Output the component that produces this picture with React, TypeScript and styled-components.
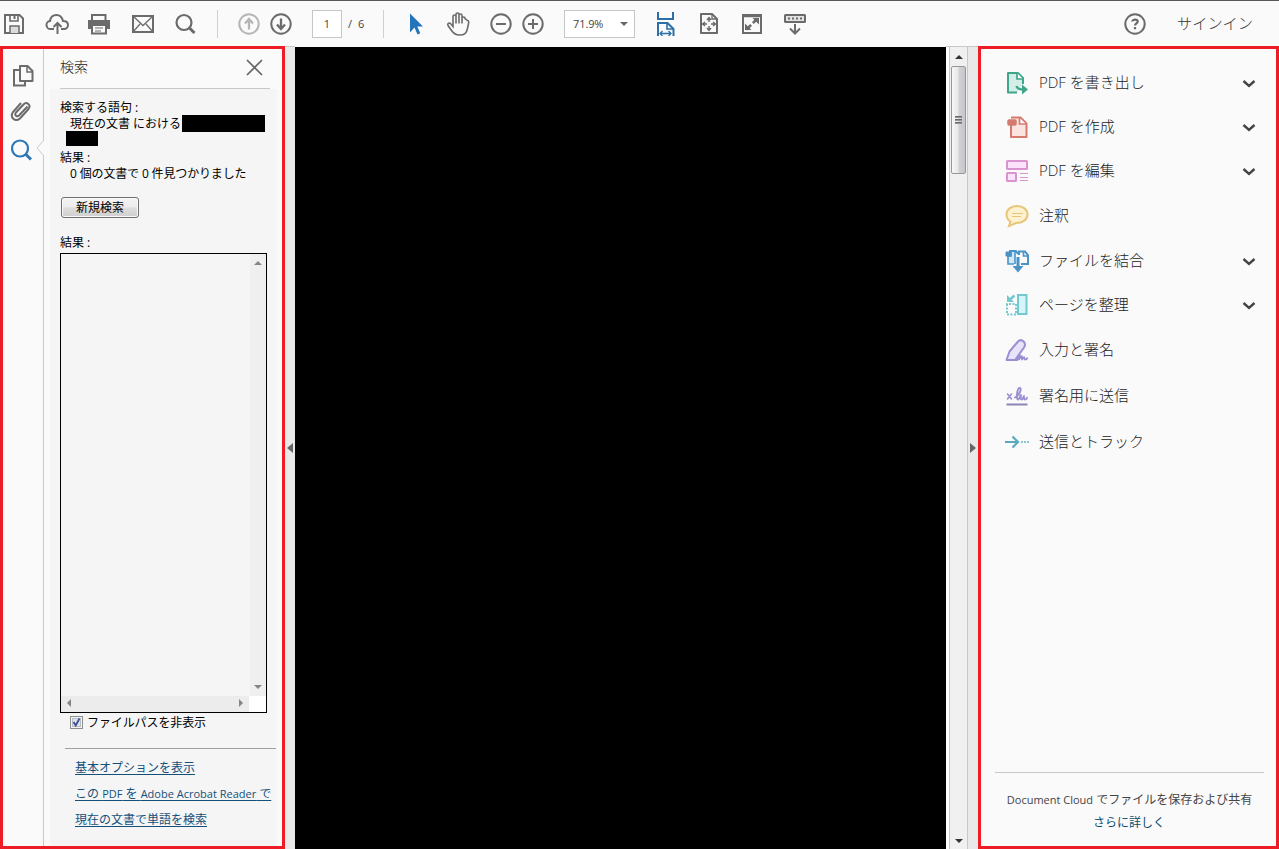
import React from "react";
import styled, { createGlobalStyle } from "styled-components";

const GlobalStyle = createGlobalStyle`
  * { box-sizing: border-box; }
  html, body { margin: 0; padding: 0; }
  body {
    width: 1279px; height: 849px; overflow: hidden; background: #fafafa;
    font-family: "Open Sans", "Noto Sans CJK JP", sans-serif;
  }
  button, a { font: inherit; color: inherit; }
`;

const RED = "#ee1c25";

const Page = styled.div`
  display: flex; flex-direction: column; width: 1279px; height: 849px;
`;

/* ---------- toolbar ---------- */
const Toolbar = styled.header`
  display: flex; align-items: center; flex: none; height: 46px;
  border-top: 1px solid #5b5759; background: #fafafa; color: #6b6b6b;
`;
const ToolIcon = styled.svg<{ $ml?: number; $tone?: string }>`
  flex: none; width: 24px; height: 24px; fill: none; stroke: currentColor; stroke-width: 2;
  margin-left: ${(p) => p.$ml ?? 0}px; color: ${(p) => p.$tone ?? "#6b6b6b"};
`;
const Divider = styled.span<{ $ml: number }>`
  flex: none; width: 1px; height: 28px; margin-left: ${(p) => p.$ml}px; background: #cfcfcf;
`;
const PageInput = styled.div`
  flex: none; width: 30px; height: 28px; margin-left: 19px; border: 1px solid #c6c6c6; background: #fff;
  font-size: 11px; line-height: 26px; text-align: center; color: #444;
`;
const PageCount = styled.span`
  flex: none; width: 17px; margin-left: 6px; font-size: 11px; line-height: 26px; white-space: pre; color: #444; word-spacing: 3px;
`;
const ZoomSelect = styled.div`
  display: flex; align-items: center; justify-content: space-between; flex: none;
  width: 71px; height: 28px; margin-left: 19px; padding: 0 6px 0 8px; border: 1px solid #c6c6c6; background: #fff;
  font-size: 11px; letter-spacing: -0.1px; color: #444;
`;
const Caret = styled.span`
  border: 4px solid transparent; border-top: 4px solid #666; border-bottom: 0;
`;
const HelpSlot = styled.div`
  display: flex; align-items: center; margin-left: auto;
`;
const SignIn = styled.span`
  width: 102px; margin-left: 30px; padding-bottom: 2px; font-size: 15.2px; line-height: 24px; font-weight: 300; color: #333;
`;

/* ---------- body ---------- */
const Body = styled.main`
  display: flex; flex: 1; min-height: 0;
`;
const LeftPanel = styled.section`
  display: flex; flex: none; width: 285px; border: 3px solid ${RED}; background: #fafafa;
`;
const NavStrip = styled.nav`
  display: flex; flex-direction: column; align-items: center; flex: none;
  position: relative; width: 41px; padding: 15px 3px 0 0; border-right: 1px solid #c9c9c9;
`;
const NavIcon = styled.svg<{ $mt?: number; $tone?: string }>`
  flex: none; width: 24px; height: 24px; fill: none; stroke-width: 2; stroke: ${(p) => p.$tone ?? "#6b6b6b"};
  margin-top: ${(p) => p.$mt ?? 0}px;
`;
const Notch = styled.svg`
  position: absolute; right: -1px; top: 90px; width: 8px; height: 18px;
`;
const SearchPane = styled.div`
  display: flex; flex-direction: column; flex: 1; min-width: 0; padding: 0 5px 0 6px;
`;
const PaneHeader = styled.div`
  display: flex; align-items: center; justify-content: space-between; flex: none;
  height: 40px; margin: 0 7px 0 10px; padding: 0 7px 3px 0; border-bottom: 1px solid #c8c8c8;
`;
const PaneTitle = styled.span`
  font-size: 14px; line-height: 20px; font-weight: 300; color: #222;
`;
const CloseIcon = styled.svg`
  width: 17px; height: 17px; stroke: #666; stroke-width: 1.7;
`;
const PaneBody = styled.div`
  display: flex; flex-direction: column; flex: 1; padding: 11px 0 0 10px; background: #f5f5f5;
  font-size: 12px; line-height: 16px; color: #000; white-space: nowrap;
`;
const Line = styled.div<{ $indent?: number }>`
  display: flex; flex: none; height: 16px; padding-left: ${(p) => p.$indent ?? 0}px;
`;
const CountLine = styled(Line)`
  letter-spacing: -0.15px;
`;
const Redaction = styled.span<{ $w: number; $h: number }>`
  flex: none; width: ${(p) => p.$w}px; height: ${(p) => p.$h}px; margin-top: -1px; background: #000;
`;
const ScopeText = styled.span`
  width: 113px; margin-right: -1px;
`;
const RedactedLine = styled(Line)`
  height: 18px;
`;
const NewSearch = styled.button`
  flex: none; width: 78px; height: 21px; margin: 15px 0 17px 1px; padding: 0; border: 1px solid #707070; border-radius: 3px;
  background: linear-gradient(#f3f3f3 0%, #ececec 48%, #dddddd 52%, #cfcfcf 100%);
  box-shadow: inset 0 0 0 1px #fafafa; font-size: 12px; line-height: 19px; color: #000;
`;
const ResultBox = styled.div`
  display: grid; grid-template: 1fr 16px / 1fr 17px; flex: none; width: 207px; height: 460px; margin-top: 2px;
  border: 1px solid #000; background: #f5f5f5;
`;
const VTrack = styled.div`
  display: flex; flex-direction: column; align-items: center; justify-content: space-between;
  padding: 7px 0 7px; margin-left: 1px; background: #efefef;
`;
const HTrack = styled.div`
  display: flex; align-items: center; justify-content: space-between; padding: 0 6px 2px 6px; background: #ececec;
`;
const Corner = styled.div`
  background: #fff;
`;
const Arrow = styled.span<{ $dir: "up" | "down" | "left" | "right"; $size?: number; $tone?: string }>`
  width: 0; height: 0; border: ${(p) => p.$size ?? 4}px solid transparent;
  ${(p) => {
    const s = p.$size ?? 4;
    const c = p.$tone ?? "#858585";
    const [point, base] = { up: ["top", "bottom"], down: ["bottom", "top"], left: ["left", "right"], right: ["right", "left"] }[p.$dir];
    return `border-${point}: 0; border-${base}: ${s + (s > 4 ? 1 : 0)}px solid ${c};`;
  }}
`;
const CheckRow = styled.label`
  display: flex; align-items: center; flex: none; height: 20px; padding-left: 10px; gap: 4px; letter-spacing: -0.1px;
`;
const CheckBox = styled.svg`
  width: 13px; height: 13px; margin-top: -1px;
`;
const PaneRule = styled.hr`
  flex: none; width: 211px; height: 1px; margin: 15px 0 6px 5px; border: 0; background: #a0a0a0;
`;
const PaneLink = styled.a`
  flex: none; height: 26px; padding-left: 15px; font-size: 12px; line-height: 26px; color: #14507a;
  text-decoration: underline; text-underline-offset: 2px; text-decoration-thickness: 1px;
`;

const Gutter = styled.div<{ $w: number }>`
  display: flex; align-items: center; justify-content: center; flex: none; width: ${(p) => p.$w}px;
  border-top: 1px solid #c8c8c8; background: #e9e9e9;
`;
const Document = styled.div`
  flex: 1; margin-top: 1px; background: #000;
`;
const ScrollArea = styled.div`
  display: flex; flex-direction: column; align-items: center; flex: none; width: 22px;
  padding: 8px 1px 6px 5px; border-top: 1px solid #c8c8c8; border-right: 1px solid #c8c8c8;
  background: linear-gradient(to right, #fff 3px, #c8c8c8 3px, #c8c8c8 4px, #f0f0f0 4px);
`;
const Thumb = styled.div`
  display: flex; flex-direction: column; align-items: center; justify-content: center; gap: 1px;
  width: 15px; height: 108px; margin: 7px 0 auto -1px; border: 1px solid #979797; border-radius: 2px;
  background: linear-gradient(to right, #f6f6f6, #e8e8ea 45%, #d0d0d5 55%, #c5c5ca);
`;
const Grip = styled.span`
  width: 7px; height: 2px; background: linear-gradient(#555, #aaa);
`;

/* ---------- tools panel ---------- */
const RightPanel = styled.aside`
  display: flex; flex-direction: column; flex: none; width: 301px; padding-top: 12px;
  border: 3px solid ${RED}; background: #fafafa;
`;
const ToolRow = styled.div<{ $mt: number }>`
  display: flex; align-items: center; flex: none; height: 44px; margin-top: ${(p) => p.$mt}px; padding: 0 20px 0 24px;
  font-size: 15px; line-height: 24px; font-weight: 300; color: #222; white-space: nowrap;
`;
const RowIcon = styled.svg`
  flex: none; width: 24px; height: 24px; margin-right: 10px; fill: none; stroke-width: 2;
`;
const RowLabel = styled.span`
  flex: 1; padding-bottom: 2px;
`;
const Chevron = styled.svg`
  width: 14px; height: 10px; margin-top: 1px; fill: none; stroke: #444; stroke-width: 2.4;
`;
const CloudFooter = styled.footer`
  display: flex; flex-direction: column; align-items: center; margin: auto 12px 12px 14px; padding-top: 15px;
  border-top: 1px solid #c8c8c8; font-size: 12px; line-height: 23px; color: #444; white-space: nowrap;
`;
const CloudText = styled.span`
  font-size: 12px;
`;
const Latin = styled.span`
  font-size: 11px;
`;
const MoreLink = styled.a`
  margin-right: 1px; color: #0d4f70;
`;

const tools = [
  {
    label: "PDF を書き出し", mt: 0, more: true,
    icon: <g stroke="#3fa58a"><path d="M12 21.500H3V2h10l5 5v6" fill="#d3eee6" strokeLinejoin="round" /><path d="M12 2v6h6" fill="#fff" strokeWidth="1.700" /><path d="M11.500 15q1 3.500 7 3.500" strokeWidth="2.400" /><path d="m17 13.500 6 5-6 5z" fill="#3fa58a" stroke="none" /></g>,
  },
  {
    label: "PDF を作成", mt: 0, more: true,
    icon: <g stroke="#d47a6f"><path d="M6 2.500h9.500l6 6V22H6V10" fill="#fbe4e0" strokeLinejoin="round" /><path d="M14.500 3v6H21" fill="#fff" strokeWidth="1.700" /><path d="M4 6h6v3H4z" fill="#d47a6f" strokeWidth="3.500" strokeLinejoin="round" /></g>,
  },
  {
    label: "PDF を編集", mt: 0, more: true,
    icon: <g stroke="#d994cf"><rect x="2" y="2" width="20" height="8" fill="#fbe4fb" rx=".5" /><rect x="2" y="14" width="9" height="8" fill="#fbe4fb" rx=".5" /><path d="M15 14.500h8M15 18.500h8M15 21.500h8" strokeWidth="1" /></g>,
  },
  {
    label: "注釈", mt: 1, more: false,
    icon: <g stroke="#e8c578"><path d="M12 2C6 2 1.500 5.500 1.500 10.500c0 3 1.500 5.500 4 7L4 22l7-3c7 0 11.500-3.500 11.500-8.500S18 2 12 2z" fill="#fdf2cf" /><path d="M7 9.500h11M7 12.500h9" strokeWidth="1" /></g>,
  },
  {
    label: "ファイルを結合", mt: 1, more: true,
    icon: <g stroke="#4a93c6"><path d="M9 15H3V7h3V2h4v13" fill="#d3e8f6" strokeWidth="1.600" /><path d="M4 2h7l2 3" /><path d="M1.500 3.500h4v3h-4z" fill="#4a93c6" strokeLinejoin="round" /><path d="M16 15h7V6l-3-3.500h-6V6" strokeWidth="2" /><path d="M18.500 3v4h4" strokeWidth="1.600" /><path d="M13 8v11" strokeWidth="3" /><path d="M7.500 17h11L13 23.500z" fill="#4a93c6" stroke="none" /></g>,
  },
  {
    label: "ページを整理", mt: 0, more: true,
    icon: <g stroke="#74c8cf"><rect x="13" y="2" width="8.500" height="19" fill="#d4f6f8" /><path d="M2 11v10.500h9V11z" strokeDasharray="2 1.500" /><path d="M2 2v7h7z" fill="#74c8cf" stroke="none" /><path d="m9.500 2.500-5 4.500" strokeWidth="2.500" /></g>,
  },
  {
    label: "入力と署名", mt: 1, more: false,
    icon: (
      <g stroke="#9a8fd0" strokeLinecap="round" strokeLinejoin="round">
        <path d="M10.500 21.500 19 9.500c3-5-2.500-9.500-6-6L4.500 13.500 1.500 22H12" fill="#e8e3fa" />
        <path d="M12 22q1.500-4.500 2.800-5-.3 2-.8 4.500 1.800-3 3-3.300-.3 2 0 3.300 1.400-2.300 2.200-2.300.1 2.300 1 2.300 1.300 0 2-1.200" strokeWidth="1.800" />
      </g>
    ),
  },
  {
    label: "署名用に送信", mt: 2, more: false,
    icon: (
      <g stroke="#9a8fd0" strokeLinecap="round" strokeLinejoin="round">
        <path d="M1.500 20.500h21" stroke="#8e84b8" strokeLinecap="butt" />
        <path d="m2.500 10 4 5M6.500 10l-4 5" strokeWidth="1.600" />
        <path d="M10 13.500c3-1.500 6.500-6.500 5.500-9-.8-1.500-2.500-.5-3.200 3.500-.6 4-.5 7.500.7 7.500 1.500 0 2-3.500 3-4.500-.5 3-.3 4.500.6 4.500 1.200 0 1.700-2.500 2.400-3.500-.2 2 0 3.500 1 3.500s1.500-.7 2-1.700" strokeWidth="1.900" />
      </g>
    ),
  },
  {
    label: "送信とトラック", mt: 2, more: false,
    icon: <g stroke="#5aa9bd"><path d="M0 12h13M7.500 6.500 13 12l-5.500 5.500" strokeWidth="2.200" /><path d="M16 12h8" stroke="#8cc4d0" strokeDasharray="2 1" /></g>,
  },
];

export default function App() {
  return (
    <Page>
      <GlobalStyle />
      <Toolbar>
        <ToolIcon $ml={2}><path d="M3 3h14.500L21 6.500V21H3z" /><path d="M8 3v6h8V3" strokeWidth="1.600" /><path d="M12.500 4v3" /><path d="M8 21v-7h9v7" fill="#dcdcdc" strokeWidth="1.500" /></ToolIcon>
        <ToolIcon $ml={19}><path d="M9 17H6a4 4 0 0 1-1-8c.500-4 3-6 6.500-6S17 5 18 9c7 0 6 8 1 8h-3" /><path d="M12.500 22V11m-4 4 4-4 4 4" /></ToolIcon>
        <ToolIcon $ml={18}><path d="M5 8V3h13.500v5" /><path d="M1 8h22v9h-3v-3H4v3H1z" fill="currentColor" stroke="none" /><path d="M1 8h22v5H1z" fill="currentColor" stroke="none" /><path d="M5 13h14v8.500H5z" fill="#fafafa" /><path d="M8 16h8M8 19h6" strokeWidth="1" /></ToolIcon>
        <ToolIcon $ml={20}><path d="M2 4h20v16H2z" /><path d="m2 4 10 9.500L22 4M2 20l7-8m13 8-7-8" strokeWidth="1.300" /></ToolIcon>
        <ToolIcon $ml={18}><circle cx="11" cy="10.500" r="7.500" strokeWidth="2.200" /><path d="m16.500 16 5 5" strokeWidth="3" /></ToolIcon>
        <Divider $ml={20} />
        <ToolIcon $ml={19} $tone="#b5b5b5"><circle cx="12" cy="12" r="9.700" /><path d="M12 17.500V7m-4 4.500L12 7l4 4.500" strokeWidth="2.300" /></ToolIcon>
        <ToolIcon $ml={8}><circle cx="12" cy="12" r="9.700" /><path d="M12 6.500V17m-4-4.500 4 4.500 4-4.500" strokeWidth="2.300" /></ToolIcon>
        <PageInput>1</PageInput>
        <PageCount>/ 6</PageCount>
        <Divider $ml={18} />
        <ToolIcon $ml={20} $tone="#2474bb"><path d="M6 1.500v19l4.500-5 3 7 2.800-1.200-3-6.800H19z" fill="currentColor" stroke="none" /></ToolIcon>
        <ToolIcon $ml={18}><path d="M7 15V5c0-2 3-2 3 0v7-9c0-2 3-2 3 0v9-8c0-2 3-2 3 0v8-5c0-2 3-2 3 0l2.500 2c1 0 1.500 1 1 3l-1 5c-1 5-3 6.500-8 6.500-4 0-6-1.500-8-4.500l-3.500-5c-1-2 1-3 2.500-2z" strokeWidth="1.600" transform="translate(0 -.5)" /></ToolIcon>
        <ToolIcon $ml={19}><circle cx="12" cy="12" r="9.700" /><path d="M7 12h10" /></ToolIcon>
        <ToolIcon $ml={8}><circle cx="12" cy="12" r="9.700" /><path d="M7 12h10M12 7v10" /></ToolIcon>
        <ZoomSelect>71.9%<Caret /></ZoomSelect>
        <ToolIcon $ml={19} $tone="#2b6fa8"><path d="M4 0v7h15V0M4 24V11h9.500l6 6v7" /><path d="M13 11v6h6" strokeWidth="1.600" /><path d="M6 21.500h11m-8.500-2.500L6 21.500 8.500 24m6-5 2.500 2.500-2.500 2.500" strokeWidth="1.300" /></ToolIcon>
        <ToolIcon $ml={19}><path d="M4 2h11l5 5v14H4z" strokeLinejoin="round" /><path d="M15 2v5h5" strokeWidth="1.300" /><path d="M12 6v4m0 4v4M6 12h4m4 0h4m-8-4 2-2.500L14 8m-4 8 2 2.500 2-2.500M8 10l-2.500 2L8 14m8-4 2.500 2-2.500 2" strokeWidth="1.400" /></ToolIcon>
        <ToolIcon $ml={19}><path d="M3 3h18v18H3z" /><path d="M2 4h20" strokeWidth="2.500" /><path d="m6.500 17.500 11-11" strokeWidth="2.600" strokeDasharray="6.500 2.500" /><path d="M12.500 6H19v6.500zM5 11.500V18h6.500z" fill="currentColor" stroke="none" /></ToolIcon>
        <ToolIcon $ml={19}><rect x="2" y="3" width="20" height="7" fill="#e3e3e3" rx=".5" /><path d="M5 6.500h14" strokeDasharray="2 2" /><path d="M12 12v9m-5-4.500 5 5 5-5" /></ToolIcon>
        <HelpSlot>
          <ToolIcon><circle cx="12" cy="12" r="9.700" /><path d="M9.300 9.500C9.300 7 14.700 7 14.700 9.500c0 1.800-2.700 2-2.700 4M12 15v2.300" strokeWidth="2.200" /></ToolIcon>
          <SignIn>サインイン</SignIn>
        </HelpSlot>
      </Toolbar>

      <Body>
        <LeftPanel>
          <NavStrip>
            <NavIcon><path d="M10 2h7.500l5 5v10H10z" strokeLinejoin="round" /><path d="M17 2v6h5.500" strokeWidth="1.500" /><path d="M9 6H4v15.500h11V18" /></NavIcon>
            <NavIcon $mt={11} viewBox="0 0 24 24"><path d="m18.500 8.500-8.500 9c-2 2-5-.500-3-3l7.500-8c3-3.500 8 .500 5 4.500l-8.500 9.500c-5 4-10.500-1-7-6.500L12 5" transform="translate(-1 -1)" /></NavIcon>
            <NavIcon $mt={15} $tone="#2e77b5"><circle cx="10" cy="10.500" r="8" strokeWidth="2.200" /><path d="m15.500 16 5.500 5.500" strokeWidth="3" /></NavIcon>
            <Notch viewBox="0 0 8 18"><path d="M8 1 1 9l7 8" fill="#fafafa" stroke="#c9c9c9" /></Notch>
          </NavStrip>
          <SearchPane>
            <PaneHeader><PaneTitle>検索</PaneTitle><CloseIcon viewBox="0 0 17 17"><path d="m1 1 15 15M16 1 1 16" /></CloseIcon></PaneHeader>
            <PaneBody>
              <Line>検索する語句 :</Line>
              <Line $indent={10}><ScopeText>現在の文書 における</ScopeText><Redaction $w={83} $h={17} /></Line>
              <RedactedLine $indent={6}><Redaction $w={32} $h={15} /></RedactedLine>
              <Line>結果 :</Line>
              <CountLine $indent={10}>0 個の文書で 0 件見つかりました</CountLine>
              <NewSearch>新規検索</NewSearch>
              <Line>結果 :</Line>
              <ResultBox>
                <div />
                <VTrack><Arrow $dir="up" /><Arrow $dir="down" /></VTrack>
                <HTrack><Arrow $dir="left" /><Arrow $dir="right" /></HTrack>
                <Corner />
              </ResultBox>
              <CheckRow>
                <CheckBox viewBox="0 0 13 13"><rect x=".5" y=".5" width="12" height="12" fill="#f4f4f4" stroke="#8e8f8f" /><rect x="2.500" y="2.500" width="8" height="8" fill="#dfe4ea" stroke="#b8bdc4" /><path d="m3.500 6 2.200 3.500L9.500 2.500" fill="none" stroke="#3b4f93" strokeWidth="1.800" /></CheckBox>
                ファイルパスを非表示
              </CheckRow>
              <PaneRule />
              <PaneLink>基本オプションを表示</PaneLink>
              <PaneLink>この <Latin>PDF</Latin> を <Latin>Adobe Acrobat Reader</Latin> で</PaneLink>
              <PaneLink>現在の文書で単語を検索</PaneLink>
            </PaneBody>
          </SearchPane>
        </LeftPanel>

        <Gutter $w={10}><Arrow $dir="left" $size={5} $tone="#666" /></Gutter>
        <Document />
        <ScrollArea>
          <Arrow $dir="up" $tone="#333" />
          <Thumb><Grip /><Grip /><Grip /></Thumb>
          <Arrow $dir="down" $tone="#333" />
        </ScrollArea>
        <Gutter $w={10}><Arrow $dir="right" $size={5} $tone="#666" /></Gutter>

        <RightPanel>
          {tools.map((t) => (
            <ToolRow key={t.label} $mt={t.mt}>
              <RowIcon viewBox="0 0 24 24">{t.icon}</RowIcon>
              <RowLabel>{t.label}</RowLabel>
              {t.more && <Chevron viewBox="0 0 14 10"><path d="m1.500 2 5.500 5 5.500-5" /></Chevron>}
            </ToolRow>
          ))}
          <CloudFooter>
            <CloudText><Latin>Document Cloud</Latin> でファイルを保存および共有</CloudText>
            <MoreLink>さらに詳しく</MoreLink>
          </CloudFooter>
        </RightPanel>
      </Body>
    </Page>
  );
}
